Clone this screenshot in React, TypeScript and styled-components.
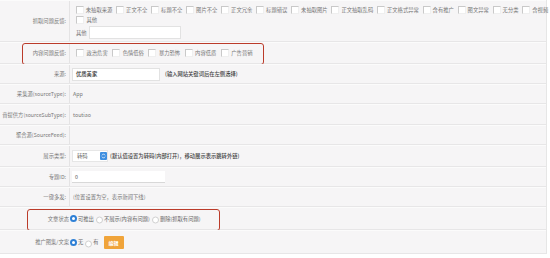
import styled, { createGlobalStyle } from "styled-components";

const GlobalStyle = createGlobalStyle`
  html, body {
    margin: 0;
    padding: 0;
    background: #ffffff;
  }
  body {
    font-family: "Noto Sans CJK SC", "Liberation Sans", sans-serif;
    font-size: 5.3px;
    color: #777;
    -webkit-text-size-adjust: none;
  }
`;

const fetchIssues = [
  "未抽取来源",
  "正文不全",
  "标题不全",
  "图片不全",
  "正文冗余",
  "标题错误",
  "未抽取图片",
  "正文抽取乱码",
  "正文格式异常",
  "含有推广",
  "图文异常",
  "无分类",
  "含视频",
];

const contentIssues = ["政治危害", "色情低俗", "暴力恐怖", "内容低质", "广告营销"];

export default function App() {
  return (
    <>
      <GlobalStyle />
      <Table>
        <Row $h={42}>
          <Label $divider>抓取问题反馈:</Label>
          <Stack>
            <Line>
              {fetchIssues.map((item) => (
                <CheckItem key={item} $dense>
                  <Box />
                  {item}
                </CheckItem>
              ))}
            </Line>
            <Line>
              <CheckItem>
                <Box />
                其他
              </CheckItem>
            </Line>
            <Line $tall>
              <OtherLabel>其他</OtherLabel>
              <TextInput $width={92} />
            </Line>
          </Stack>
        </Row>

        <Row $h={22}>
          <Label $divider>内容问题反馈:</Label>
          <Value>
            {contentIssues.map((item) => (
              <CheckItem key={item}>
                <Box />
                {item}
              </CheckItem>
            ))}
          </Value>
          <Highlight $left={22} $top={0} $width={242} $height={22} />
        </Row>

        <Row $h={20}>
          <Label $divider>来源:</Label>
          <Value>
            <TextInput $width={88}>优质美家</TextInput>
            <Hint>(输入网站关键词后在左侧选择)</Hint>
          </Value>
        </Row>

        <Row $h={20}>
          <Label $divider>采集源(sourceType):</Label>
          <Value>
            <Plain>App</Plain>
          </Value>
        </Row>

        <Row $h={21}>
          <Label $divider>音提供方(sourceSubType):</Label>
          <Value>
            <Plain>toutiao</Plain>
          </Value>
        </Row>

        <Row $h={20}>
          <Label $divider>聚合源(SourceFeed):</Label>
          <Value />
        </Row>

        <Row $h={22}>
          <Label $divider>展示类型:</Label>
          <Value>
            <Select>
              <SelectText>转码</SelectText>
              <SelectArrow>
                <svg width="5" height="6" viewBox="0 0 5 6">
                  <path d="M1 2.3 L2.5 0.8 L4 2.3" fill="none" stroke="#fff" strokeWidth="0.8" />
                  <path d="M1 3.7 L2.5 5.2 L4 3.7" fill="none" stroke="#fff" strokeWidth="0.8" />
                </svg>
              </SelectArrow>
            </Select>
            <Hint $gap={2}>(默认值设置为转码(内部打开)，移动展示表示跳转外链)</Hint>
          </Value>
        </Row>

        <Row $h={20}>
          <Label $divider>专题ID:</Label>
          <Value>
            <LineInput>0</LineInput>
          </Value>
        </Row>

        <Row $h={20}>
          <Label $divider>一键多发:</Label>
          <Value>
            <Plain>(位置设置为空，表示新闻下线)</Plain>
          </Value>
        </Row>

        <Row $h={23}>
          <Label>文章状态</Label>
          <Value $tight>
            <RadioItem>
              <Radio $checked />
              可推出
            </RadioItem>
            <RadioItem>
              <Radio />
              不展示(内容有问题)
            </RadioItem>
            <RadioItem>
              <Radio />
              删除(抓取有问题)
            </RadioItem>
          </Value>
          <Highlight $left={27} $top={1} $width={193} $height={22} />
        </Row>

        <Row $h={24}>
          <Label>推广图集/文案</Label>
          <Value $tight>
            <RadioItem>
              <Radio $checked />无
            </RadioItem>
            <RadioItem>
              <Radio />有
            </RadioItem>
            <EditButton>编辑</EditButton>
          </Value>
        </Row>
      </Table>
    </>
  );
}

const Table = styled.div`
  width: 547px;
  display: flex;
  flex-direction: column;
  border-right: 1px solid #e6e6e6;
  box-sizing: border-box;
`;

const Row = styled.div<{ $h: number }>`
  position: relative;
  display: grid;
  grid-template-columns: 70px 1fr;
  height: ${(p) => p.$h}px;
  background: #f6f5f6;
  border-top: 1px solid #fbfbfb;
  border-bottom: 1px solid #e7e6e7;
  box-sizing: border-box;
`;

const Label = styled.div<{ $divider?: boolean }>`
  display: flex;
  align-items: center;
  justify-content: flex-end;
  padding-right: ${(p) => (p.$divider ? 3 : 1)}px;
  border-right: ${(p) => (p.$divider ? "1px solid #e4e3e4" : "none")};
  white-space: nowrap;
  color: #7a7a7a;
`;

const Value = styled.div<{ $tight?: boolean }>`
  display: flex;
  align-items: center;
  padding-left: ${(p) => (p.$tight ? 0 : 2)}px;
  white-space: nowrap;
`;

const Stack = styled.div`
  display: flex;
  flex-direction: column;
  padding: 4px 0 0 2px;
`;

const Line = styled.div<{ $tall?: boolean }>`
  display: flex;
  align-items: center;
  height: ${(p) => (p.$tall ? 13 : 10)}px;
  margin-top: ${(p) => (p.$tall ? 1 : 0)}px;
  white-space: nowrap;
`;

const CheckItem = styled.label<{ $dense?: boolean }>`
  display: inline-flex;
  align-items: center;
  gap: ${(p) => (p.$dense ? 2 : 2.5)}px;
  margin-left: ${(p) => (p.$dense ? 3.8 : 4)}px;
  margin-right: ${(p) => (p.$dense ? 0 : 0.5)}px;
  color: #777;
`;

const Box = styled.span`
  display: inline-block;
  width: 6px;
  height: 6px;
  background: #ffffff;
  border: 0.5px solid #c9c9c9;
  border-right-color: #efefef;
  border-bottom-color: #efefef;
`;

const OtherLabel = styled.span`
  margin-left: 4px;
  width: 13px;
`;

const TextInput = styled.div<{ $width: number }>`
  display: flex;
  align-items: center;
  width: ${(p) => p.$width}px;
  height: 13px;
  box-sizing: border-box;
  padding-left: 3px;
  background: #ffffff;
  border: 0.5px solid #e2e2e2;
  color: #333;
  font-weight: 500;
`;

const Hint = styled.span<{ $gap?: number }>`
  margin-left: ${(p) => p.$gap ?? 5}px;
  color: #444;
  font-weight: 500;
`;

const Plain = styled.span`
  margin-left: 1px;
  color: #777;
`;

const Select = styled.div`
  display: flex;
  align-items: center;
  width: 36px;
  height: 12px;
  background: #ffffff;
  border: 0.5px solid #e6e6e6;
  box-sizing: border-box;
`;

const SelectText = styled.span`
  flex: 1;
  padding-left: 4px;
  color: #666;
`;

const SelectArrow = styled.span`
  display: flex;
  align-items: center;
  justify-content: center;
  width: 7px;
  height: 8px;
  margin-right: 0.5px;
  border-radius: 1px;
  background: #3d8ee0;
`;

const LineInput = styled.div`
  display: flex;
  align-items: center;
  width: 93px;
  height: 12px;
  padding-left: 3px;
  box-sizing: border-box;
  background: #ffffff;
  border-bottom: 0.5px solid #d8d8d8;
  color: #555;
`;

const RadioItem = styled.label`
  display: inline-flex;
  align-items: center;
  gap: 1px;
  margin-right: 2px;
  color: #666;
`;

const Radio = styled.span<{ $checked?: boolean }>`
  display: inline-block;
  box-sizing: border-box;
  width: 7px;
  height: 7px;
  border-radius: 50%;
  background: #ffffff;
  border: ${(p) => (p.$checked ? "2px solid #2f80d6" : "0.5px solid #d0d0d0")};
  transform: translateY(${(p) => (p.$checked ? 0 : 1.5)}px);
`;

const EditButton = styled.button`
  margin-left: 3px;
  width: 20px;
  height: 13px;
  padding: 0;
  border: none;
  border-radius: 1px;
  background: #f0a43a;
  color: #ffffff;
  font-family: inherit;
  font-size: 5px;
  font-weight: 700;
`;

const Highlight = styled.div<{ $left: number; $top: number; $width: number; $height: number }>`
  position: absolute;
  left: ${(p) => p.$left}px;
  top: ${(p) => p.$top}px;
  width: ${(p) => p.$width}px;
  height: ${(p) => p.$height}px;
  box-sizing: border-box;
  border: 1.5px solid #bb3b2a;
  border-radius: 3px;
  pointer-events: none;
`;
